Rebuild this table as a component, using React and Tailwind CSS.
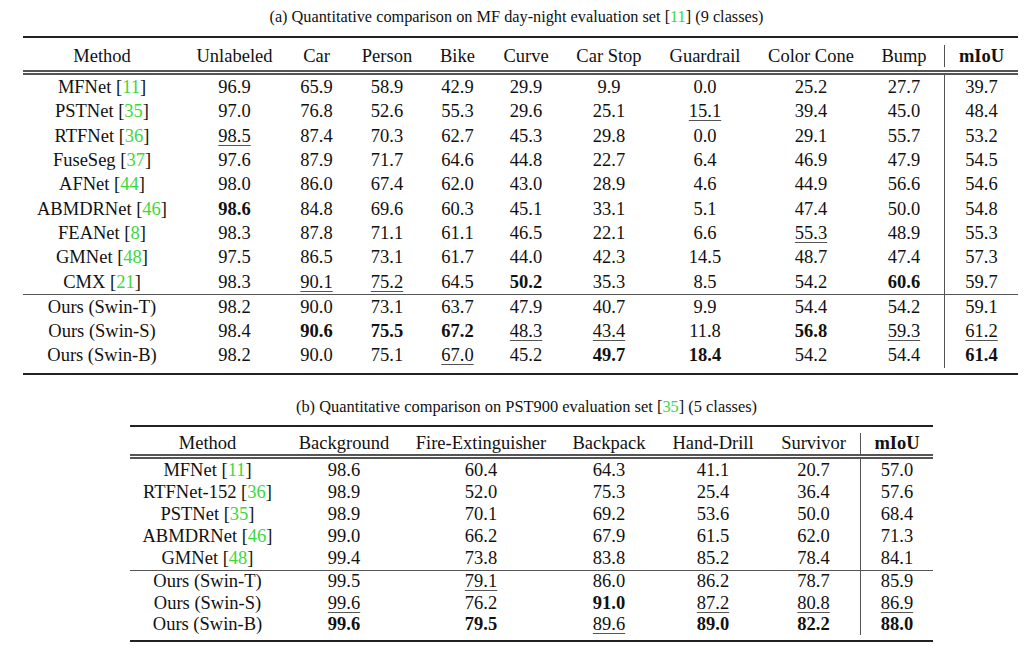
import React from "react";

// values: "b:" bold, "u:" underlined, otherwise plain
const mfCols = ["Unlabeled", "Car", "Person", "Bike", "Curve", "Car Stop", "Guardrail", "Color Cone", "Bump"];

const mfTop = [
  { name: "MFNet", ref: "11", v: ["96.9", "65.9", "58.9", "42.9", "29.9", "9.9", "0.0", "25.2", "27.7", "39.7"] },
  { name: "PSTNet", ref: "35", v: ["97.0", "76.8", "52.6", "55.3", "29.6", "25.1", "u:15.1", "39.4", "45.0", "48.4"] },
  { name: "RTFNet", ref: "36", v: ["u:98.5", "87.4", "70.3", "62.7", "45.3", "29.8", "0.0", "29.1", "55.7", "53.2"] },
  { name: "FuseSeg", ref: "37", v: ["97.6", "87.9", "71.7", "64.6", "44.8", "22.7", "6.4", "46.9", "47.9", "54.5"] },
  { name: "AFNet", ref: "44", v: ["98.0", "86.0", "67.4", "62.0", "43.0", "28.9", "4.6", "44.9", "56.6", "54.6"] },
  { name: "ABMDRNet", ref: "46", v: ["b:98.6", "84.8", "69.6", "60.3", "45.1", "33.1", "5.1", "47.4", "50.0", "54.8"] },
  { name: "FEANet", ref: "8", v: ["98.3", "87.8", "71.1", "61.1", "46.5", "22.1", "6.6", "u:55.3", "48.9", "55.3"] },
  { name: "GMNet", ref: "48", v: ["97.5", "86.5", "73.1", "61.7", "44.0", "42.3", "14.5", "48.7", "47.4", "57.3"] },
  { name: "CMX", ref: "21", v: ["98.3", "u:90.1", "u:75.2", "64.5", "b:50.2", "35.3", "8.5", "54.2", "b:60.6", "59.7"] },
];

const mfOurs = [
  { name: "Ours (Swin-T)", v: ["98.2", "90.0", "73.1", "63.7", "47.9", "40.7", "9.9", "54.4", "54.2", "59.1"] },
  { name: "Ours (Swin-S)", v: ["98.4", "b:90.6", "b:75.5", "b:67.2", "u:48.3", "u:43.4", "11.8", "b:56.8", "u:59.3", "u:61.2"] },
  { name: "Ours (Swin-B)", v: ["98.2", "90.0", "75.1", "u:67.0", "45.2", "b:49.7", "b:18.4", "54.2", "54.4", "b:61.4"] },
];

const pstCols = ["Background", "Fire-Extinguisher", "Backpack", "Hand-Drill", "Survivor"];

const pstTop = [
  { name: "MFNet", ref: "11", v: ["98.6", "60.4", "64.3", "41.1", "20.7", "57.0"] },
  { name: "RTFNet-152", ref: "36", v: ["98.9", "52.0", "75.3", "25.4", "36.4", "57.6"] },
  { name: "PSTNet", ref: "35", v: ["98.9", "70.1", "69.2", "53.6", "50.0", "68.4"] },
  { name: "ABMDRNet", ref: "46", v: ["99.0", "66.2", "67.9", "61.5", "62.0", "71.3"] },
  { name: "GMNet", ref: "48", v: ["99.4", "73.8", "83.8", "85.2", "78.4", "84.1"] },
];

const pstOurs = [
  { name: "Ours (Swin-T)", v: ["99.5", "u:79.1", "86.0", "86.2", "78.7", "85.9"] },
  { name: "Ours (Swin-S)", v: ["u:99.6", "76.2", "b:91.0", "u:87.2", "u:80.8", "u:86.9"] },
  { name: "Ours (Swin-B)", v: ["b:99.6", "b:79.5", "u:89.6", "b:89.0", "b:82.2", "b:88.0"] },
];

const Cite = ({ n }) => (
  <>
    {" "}[<span className="text-[#3cd83c]">{n}</span>]
  </>
);

const Val = ({ s }) => {
  if (s.startsWith("b:")) return <span className="font-bold">{s.slice(2)}</span>;
  if (s.startsWith("u:"))
    return (
      <span className="underline decoration-[#555] decoration-1 underline-offset-[3px]">
        {s.slice(2)}
      </span>
    );
  return <span>{s}</span>;
};

const Row = ({ row, grid, h }) => (
  <div className={`grid ${grid} ${h}`}>
    <div className="flex items-center justify-center whitespace-nowrap">
      {row.name}
      {row.ref && <Cite n={row.ref} />}
    </div>
    {row.v.map((s, i) => (
      <div
        key={i}
        className={`flex items-center justify-center ${
          i === row.v.length - 1 ? "border-l border-[#555]" : ""
        }`}
      >
        <Val s={s} />
      </div>
    ))}
  </div>
);

const Header = ({ cols, grid, h }) => (
  <div className={`grid ${grid} ${h}`}>
    <div className="flex items-center justify-center">Method</div>
    {cols.map((c) => (
      <div key={c} className="flex items-center justify-center whitespace-nowrap">
        {c}
      </div>
    ))}
    <div className="flex items-center justify-center border-l border-[#555] font-bold">mIoU</div>
  </div>
);

export default function App() {
  const gridA = "grid-cols-[158px_107px_57px_84px_57px_80px_86px_106px_106px_80px_74px]";
  const gridB = "grid-cols-[155px_118px_156px_100px_108px_93px_73px]";

  return (
    <div className="w-[1024px] min-h-[649px] bg-white text-[#111] font-['Liberation_Serif',serif] text-[18.5px] leading-[20px]">
      {/* table (a) */}
      <div className="ml-[23px] w-[995px] pt-[7px]">
        <div className="text-center text-[16.3px] leading-[20px] pr-[8px]">
          (a) Quantitative comparison on MF day-night evaluation set <Cite n="11" /> (9 classes)
        </div>
        <div className="mt-[9px] h-[2px] bg-[#222]"></div>
        <div className="pt-[7px]">
          <Header cols={mfCols} grid={gridA} h="h-[25px] pb-[3px]" />
        </div>
        <div className="h-[5px] border-y-2 border-[#555]"></div>
        {mfTop.map((r) => (
          <Row key={r.name} row={r} grid={gridA} h="h-[24.3px]" />
        ))}
        <div className="h-px bg-[#555]"></div>
        {mfOurs.map((r) => (
          <Row key={r.name} row={r} grid={gridA} h="h-[24.3px]" />
        ))}
        <div className="h-[5px]"></div>
        <div className="h-[2px] bg-[#222]"></div>
      </div>

      {/* table (b) */}
      <div className="ml-[130px] w-[803px] mt-[22px]">
        <div className="text-center text-[16.4px] leading-[20px] pr-[10px]">
          (b) Quantitative comparison on PST900 evaluation set <Cite n="35" /> (5 classes)
        </div>
        <div className="mt-[8px] h-[2px] bg-[#222]"></div>
        <div className="pt-[6px]">
          <Header cols={pstCols} grid={gridB} h="h-[21px]" />
        </div>
        <div className="h-[5px] border-y-2 border-[#555]"></div>
        {pstTop.map((r) => (
          <Row key={r.name} row={r} grid={gridB} h="h-[22.2px]" />
        ))}
        <div className="h-px bg-[#555]"></div>
        {pstOurs.map((r) => (
          <Row key={r.name} row={r} grid={gridB} h="h-[21.5px]" />
        ))}
        <div className="h-[4.5px]"></div>
        <div className="h-[2px] bg-[#222]"></div>
      </div>
    </div>
  );
}
